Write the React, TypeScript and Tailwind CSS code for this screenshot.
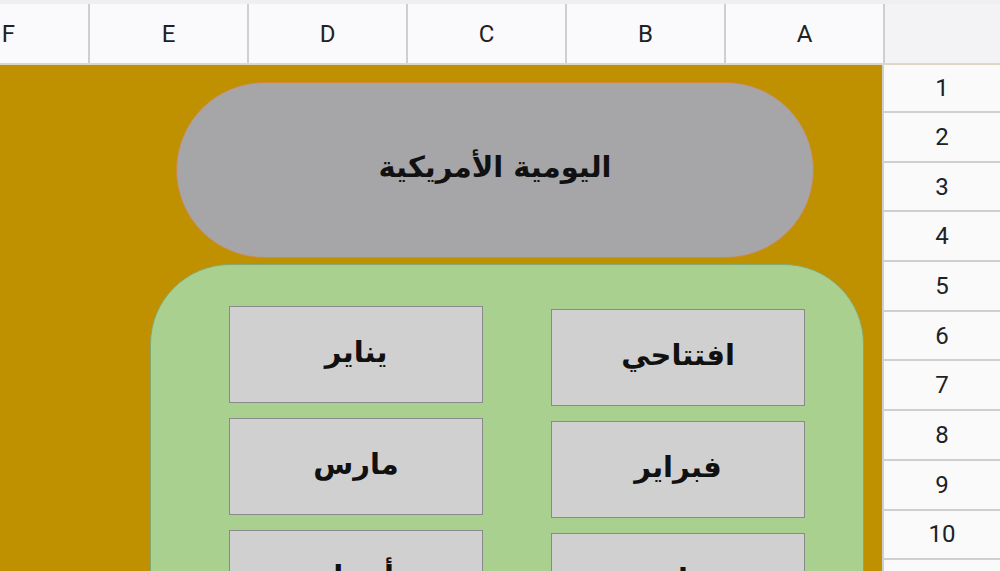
import React from "react";

const cols = ["E", "D", "C", "B", "A"];
const rows = ["1", "2", "3", "4", "5", "6", "7", "8", "9", "10"];

function Btn({ label }: { label: string }) {
  return (
    <div
      className="h-[97px] shrink-0 w-full bg-[#d0d0d0] border border-[#8a8a8a] flex items-center justify-center text-[29px] font-bold text-[#111] pb-[4px]"
      dir="rtl"
      style={{ fontFamily: '"DejaVu Sans", "Noto Sans", sans-serif' }}
    >
      {label}
    </div>
  );
}

export default function App() {
  return (
    <div
      className="w-[1000px] h-[571px] overflow-hidden flex flex-col bg-[#fafafc]"
      style={{ fontFamily: 'Roboto, "Liberation Sans", sans-serif' }}
    >
      <div className="h-[4px] bg-[#efeff1] shrink-0" />
      <div className="h-[61px] flex shrink-0 border-b-2 border-[#ded6c6]">
        <div className="w-[88px] flex justify-end overflow-hidden shrink-0">
          <div className="w-[159px] shrink-0 flex items-center justify-center text-[24px] text-[#202124]">F</div>
        </div>
        {cols.map((c) => (
          <div
            key={c}
            className="w-[159px] shrink-0 border-l-2 border-[#cfcfd1] flex items-center justify-center text-[24px] text-[#202124]"
          >
            {c}
          </div>
        ))}
        <div className="flex-1 border-l-2 border-[#cfcfd1] bg-[#f3f3f5]" />
      </div>
      <div className="flex flex-1 min-h-0">
        <div className="w-[882px] shrink-0 bg-[#bf9000] flex flex-col overflow-hidden">
          <div className="ml-[176px] mt-[17px] w-[638px] h-[176px] shrink-0 rounded-full bg-[#a6a6a8] border border-[#cf8a3c] flex items-center justify-center">
            <span
              dir="rtl"
              className="text-[29px] text-[#111] font-bold pb-[4px]"
              style={{ fontFamily: '"DejaVu Sans", "Noto Sans", sans-serif' }}
            >
              اليومية الأمريكية
            </span>
          </div>
          <div className="ml-[150px] mt-[6px] w-[714px] h-[340px] shrink-0 bg-[#a9d08e] border border-[#86a86e] rounded-t-[80px] flex gap-[68px] pl-[78px]">
            <div className="w-[254px] flex flex-col gap-[15px] pt-[41px]">
              <Btn label="يناير" />
              <Btn label="مارس" />
              <Btn label="أبريل" />
            </div>
            <div className="w-[254px] flex flex-col gap-[15px] pt-[44px]">
              <Btn label="افتتاحي" />
              <Btn label="فبراير" />
              <Btn label="مايو" />
            </div>
          </div>
        </div>
        <div className="flex-1 border-l-2 border-[#cfcfd1] flex flex-col bg-[#fafafb]">
          {rows.map((r) => (
            <div
              key={r}
              className={`shrink-0 border-b-2 border-[#cfcfd1] flex items-center justify-center text-[24px] text-[#202124] ${r === "1" ? "h-[48px]" : "h-[49.7px]"}`}
            >
              {r}
            </div>
          ))}
        </div>
      </div>
    </div>
  );
}
